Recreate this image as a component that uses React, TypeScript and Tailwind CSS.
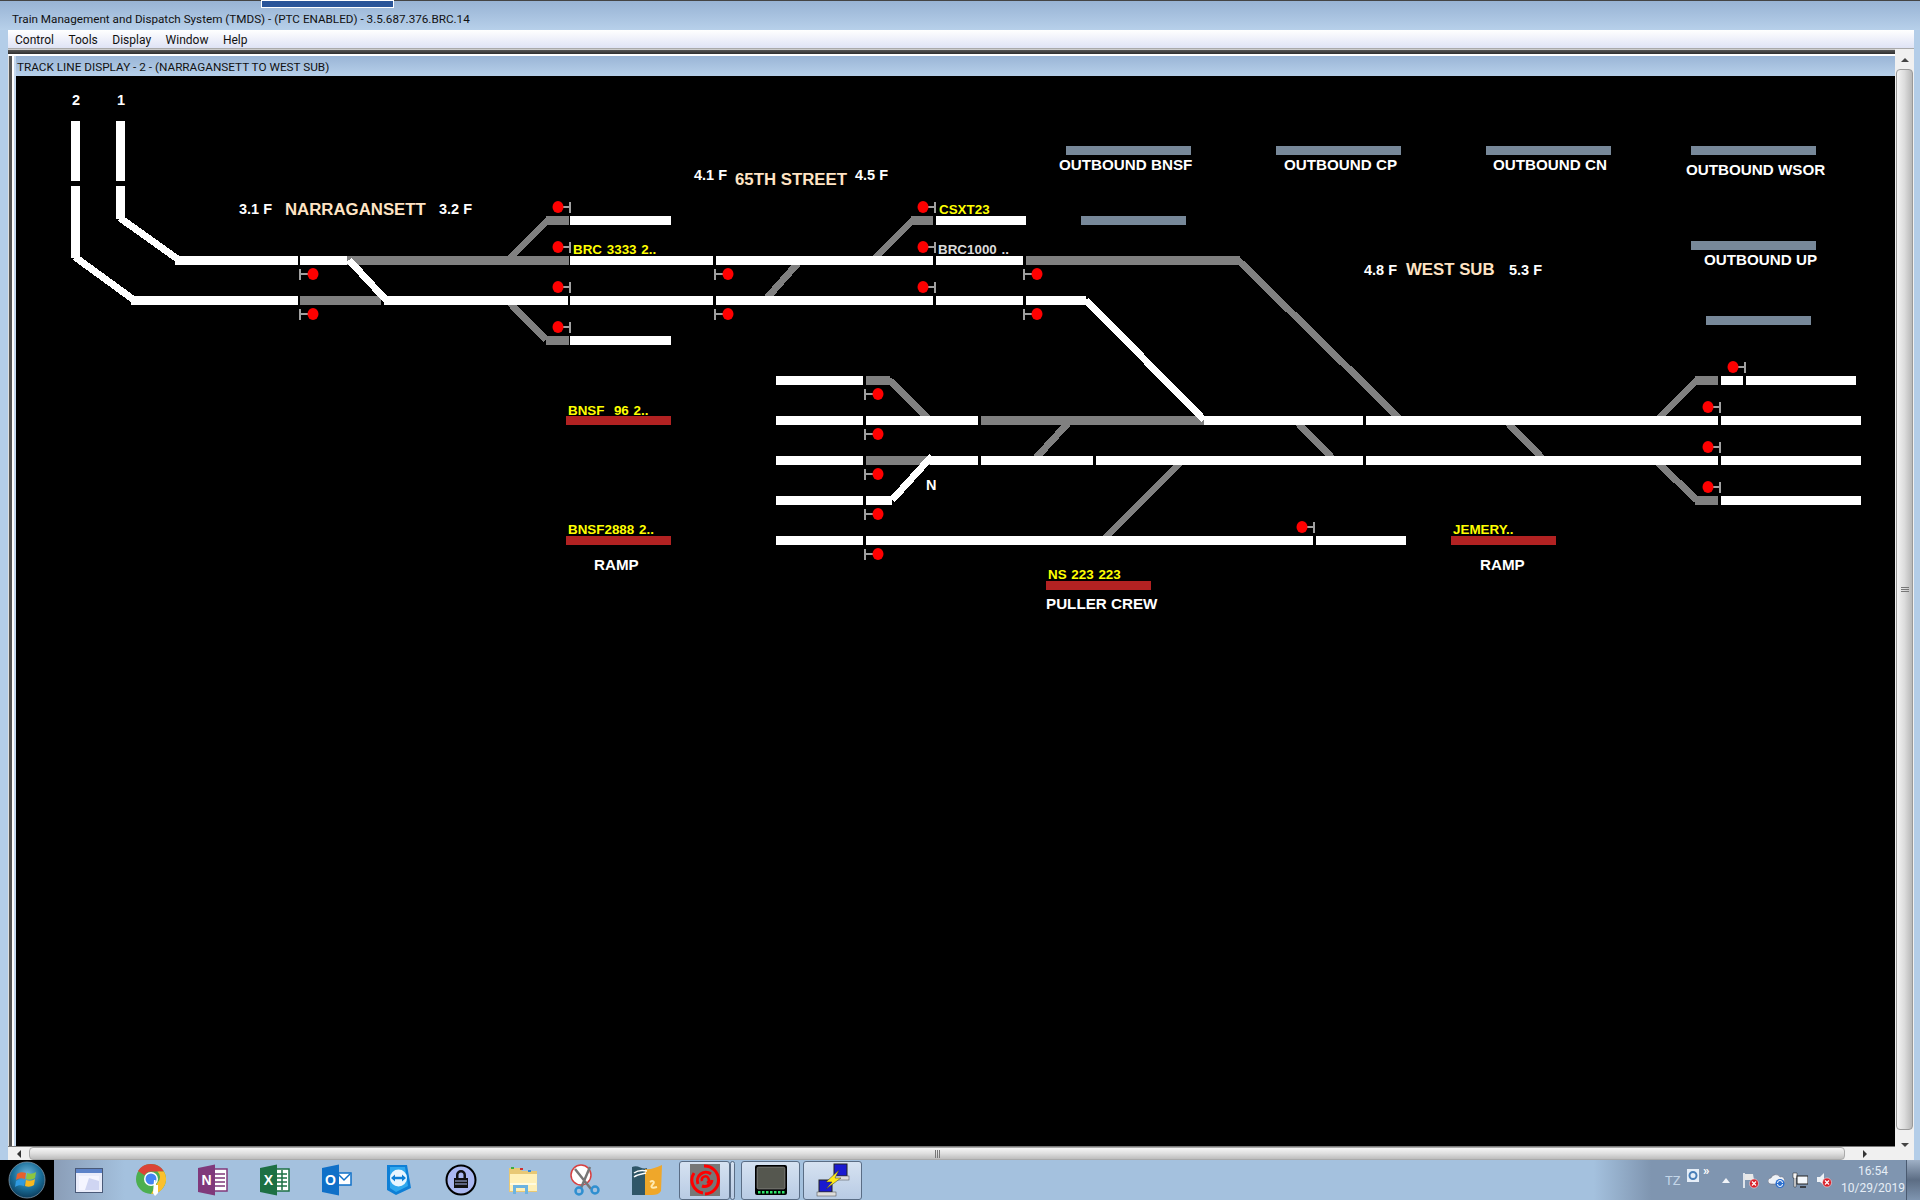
const WHITE_TRACKS = [
  [71, 80, 121, 181], [116, 125, 121, 181], [71, 80, 186, 258], [116, 125, 186, 219],
];

// [x1, x2, top] — all horizontal track segments are 9px tall
const WHITE_SEGMENTS = [
  [175, 298, 256], [300, 347, 256], [570, 713, 256], [716, 933, 256], [936, 1023, 256],
  [131, 298, 296], [384, 568, 296], [570, 713, 296], [716, 933, 296], [936, 1023, 296], [1026, 1086, 296],
  [570, 671, 216], [570, 671, 336], [936, 1026, 216],
  [776, 863, 376], [1721, 1743, 376], [1746, 1856, 376],
  [776, 863, 416], [866, 978, 416], [1204, 1363, 416], [1366, 1718, 416], [1721, 1861, 416],
  [776, 863, 456], [930, 978, 456], [981, 1093, 456], [1096, 1363, 456], [1366, 1718, 456], [1721, 1861, 456],
  [776, 863, 496], [866, 892, 496], [1721, 1861, 496],
  [776, 863, 536], [866, 1313, 536], [1316, 1406, 536],
];

const GRAY_SEGMENTS = [
  [347, 569, 256], [300, 381, 296], [546, 569, 216], [546, 569, 336], [911, 933, 216], [1026, 1240, 256],
  [866, 890, 376], [981, 1206, 416], [866, 930, 456], [1695, 1718, 376], [1695, 1718, 496],
];

const GRAY_LINES = [
  [510, 258, 548, 220], [510, 303, 546, 340], [767, 298, 798, 263], [875, 258, 913, 220], [1238, 260, 1399, 418],
  [889, 380, 929, 419], [1036, 458, 1068, 423], [1105, 538, 1180, 463], [1298, 423, 1332, 458], [1508, 423, 1542, 458],
  [1659, 418, 1699, 378], [1658, 463, 1697, 500],
];

const WHITE_LINES = [
  [75, 257, 134, 300], [120, 218, 179, 260], [349, 260, 386, 300], [1086, 300, 1204, 420], [892, 500, 932, 456],
];

// signals with the lamp left of the post: [lamp x, y]
const LAMPS_LEFT = [
  [558, 207], [558, 247], [558, 287], [558, 327], [923, 207], [923, 247], [923, 287],
  [1733, 367], [1708, 407], [1708, 447], [1708, 487], [1302, 527],
];

// signals with the lamp right of the post
const LAMPS_RIGHT = [
  [313, 274], [313, 314], [728, 274], [728, 314], [1037, 274], [1037, 314],
  [878, 394], [878, 434], [878, 474], [878, 514], [878, 554],
];

const SLATE_BARS = [
  [1066, 1191, 146], [1276, 1401, 146], [1486, 1611, 146], [1691, 1816, 146],
  [1691, 1816, 241], [1706, 1811, 316], [1081, 1186, 216],
];

const RED_BARS = [
  [566, 671, 416], [566, 671, 536], [1046, 1151, 581], [1451, 1556, 536],
];

function TrackDiagram() {
  return (
    <svg className="absolute inset-0 h-full w-full" viewBox="16 76 1879 1070" shapeRendering="crispEdges">
      {GRAY_LINES.map(([x1, y1, x2, y2], i) => (
        <line key={i} x1={x1} y1={y1} x2={x2} y2={y2} stroke="#808080" strokeWidth="7" />
      ))}
      {GRAY_SEGMENTS.map(([a, b, y], i) => (
        <rect key={i} x={a} y={y} width={b - a} height="9" fill="#808080" />
      ))}
      {WHITE_LINES.map(([x1, y1, x2, y2], i) => (
        <line key={i} x1={x1} y1={y1} x2={x2} y2={y2} stroke="#fff" strokeWidth="7" />
      ))}
      {WHITE_TRACKS.map(([a, b, t, e], i) => (
        <rect key={i} x={a} y={t} width={b - a} height={e - t} fill="#fff" />
      ))}
      {WHITE_SEGMENTS.map(([a, b, y], i) => (
        <rect key={i} x={a} y={y} width={b - a} height="9" fill="#fff" />
      ))}
      {SLATE_BARS.map(([a, b, y], i) => (
        <rect key={i} x={a} y={y} width={b - a} height="9" fill="#778899" />
      ))}
      {RED_BARS.map(([a, b, y], i) => (
        <rect key={i} x={a} y={y} width={b - a} height="9" fill="#b22222" />
      ))}
      {LAMPS_LEFT.map(([x, y], i) => (
        <g key={i}>
          <rect x={x + 5} y={y - 1} width="7" height="2" fill="#a0a0a0" />
          <rect x={x + 11} y={y - 5} width="2" height="11" fill="#a0a0a0" />
          <ellipse cx={x} cy={y} rx="5.5" ry="6" fill="#f00" shapeRendering="auto" />
        </g>
      ))}
      {LAMPS_RIGHT.map(([x, y], i) => (
        <g key={i}>
          <rect x={x - 13} y={y - 1} width="8" height="2" fill="#a0a0a0" />
          <rect x={x - 14} y={y - 5} width="2" height="11" fill="#a0a0a0" />
          <ellipse cx={x} cy={y} rx="5.5" ry="6" fill="#f00" shapeRendering="auto" />
        </g>
      ))}
    </svg>
  );
}

function DiagramLabels() {
  const base = "absolute whitespace-pre font-bold font-['Liberation_Sans',Arial,sans-serif]";
  const speed = `${base} text-[14.5px] leading-4 text-white`;
  const station = `${base} text-[16.8px] leading-4 text-[#ffe4c4]`;
  const lane = `${base} text-[15.2px] leading-4 text-white`;
  const train = `${base} text-[13.4px] leading-4 text-[#ffff00] [word-spacing:1px]`;

  return (
    <>
      <span className={`${speed} left-[56px] top-[16px]`}>2</span>
      <span className={`${speed} left-[101px] top-[16px]`}>1</span>

      <span className={`${speed} left-[223px] top-[125px]`}>3.1 F</span>
      <span className={`${station} left-[269px] top-[126px]`}>NARRAGANSETT</span>
      <span className={`${speed} left-[423px] top-[125px]`}>3.2 F</span>

      <span className={`${speed} left-[678px] top-[91px]`}>4.1 F</span>
      <span className={`${station} left-[719px] top-[96px]`}>65TH STREET</span>
      <span className={`${speed} left-[839px] top-[91px]`}>4.5 F</span>

      <span className={`${speed} left-[1348px] top-[186px]`}>4.8 F</span>
      <span className={`${station} left-[1390px] top-[186px]`}>WEST SUB</span>
      <span className={`${speed} left-[1493px] top-[186px]`}>5.3 F</span>

      <span className={`${lane} left-[1043px] top-[81px]`}>OUTBOUND BNSF</span>
      <span className={`${lane} left-[1268px] top-[81px]`}>OUTBOUND CP</span>
      <span className={`${lane} left-[1477px] top-[81px]`}>OUTBOUND CN</span>
      <span className={`${lane} left-[1670px] top-[86px]`}>OUTBOUND WSOR</span>
      <span className={`${lane} left-[1688px] top-[176px]`}>OUTBOUND UP</span>

      <span className={`${train} left-[557px] top-[166px]`}>BRC 3333 2..</span>
      <span className={`${train} left-[923px] top-[126px]`}>CSXT23</span>
      <span className={`${train} left-[922px] top-[166px] text-[#dcdcdc]!`}>BRC1000 ..</span>
      <span className={`${train} left-[552px] top-[327px]`}>BNSF  96 2..</span>
      <span className={`${train} left-[552px] top-[446px]`}>BNSF2888 2..</span>
      <span className={`${train} left-[1032px] top-[491px]`}>NS 223 223</span>
      <span className={`${train} left-[1437px] top-[446px]`}>JEMERY..</span>

      <span className={`${lane} left-[578px] top-[481px]`}>RAMP</span>
      <span className={`${lane} left-[1464px] top-[481px]`}>RAMP</span>
      <span className={`${lane} left-[1030px] top-[520px]`}>PULLER CREW</span>
      <span className={`${speed} left-[910px] top-[401px]`}>N</span>
    </>
  );
}

function Grip({ vertical = false }: { vertical?: boolean }) {
  return (
    <div className={vertical ? "flex flex-col gap-px" : "flex gap-px"}>
      <div className={vertical ? "h-px w-2 bg-[#777]" : "h-2 w-px bg-[#777]"} />
      <div className={vertical ? "h-px w-2 bg-[#777]" : "h-2 w-px bg-[#777]"} />
      <div className={vertical ? "h-px w-2 bg-[#777]" : "h-2 w-px bg-[#777]"} />
    </div>
  );
}

function VerticalScrollbar() {
  return (
    <div className="flex w-[19px] flex-col bg-[#f0f0f0] pt-px">
      <div className="flex h-[19px] items-center justify-center">
        <div className="h-0 w-0 border-x-[4px] border-b-[4px] border-x-transparent border-b-[#444]" />
      </div>
      <div className="mx-px flex flex-1 items-start justify-center rounded-sm border border-[#999] bg-gradient-to-r from-[#f4f4f4] via-[#dcdcdc] to-[#b8b8b8] pt-[517px]">
        <Grip vertical />
      </div>
      <div className="flex h-[30px] items-center justify-center">
        <div className="h-0 w-0 border-x-[4px] border-t-[4px] border-x-transparent border-t-[#444]" />
      </div>
    </div>
  );
}

function HorizontalScrollbar() {
  return (
    <div className="flex h-[14px] border-t border-[#777] bg-[#f0f0f0]">
      <div className="flex w-[21px] shrink-0 items-center justify-center">
        <div className="h-0 w-0 border-y-[4px] border-r-[4px] border-y-transparent border-r-[#333]" />
      </div>
      <div className="flex w-[1816px] shrink-0 items-center justify-center rounded-sm border border-[#aaa] bg-gradient-to-b from-[#f6f6f6] via-[#dedede] to-[#bdbdbd]">
        <Grip />
      </div>
      <div className="flex flex-1 items-center justify-end pr-[28px]">
        <div className="h-0 w-0 border-y-[4px] border-l-[4px] border-y-transparent border-l-[#333]" />
      </div>
    </div>
  );
}

function StartOrb() {
  return (
    <div className="flex h-10 w-[54px] shrink-0 items-center justify-center bg-black">
      <svg width="38" height="38" viewBox="0 0 38 38">
        <defs>
          <radialGradient id="orb" cx="50%" cy="35%" r="70%">
            <stop offset="0%" stopColor="#6fb6dc" />
            <stop offset="55%" stopColor="#1a6f9a" />
            <stop offset="100%" stopColor="#0a3350" />
          </radialGradient>
        </defs>
        <circle cx="19" cy="19" r="18" fill="url(#orb)" stroke="#7d95a8" strokeWidth="0.8" />
        <path d="M9 13c3-2 6-2 9-1l-1 6c-3-1-6-1-9 1z" fill="#e8602c" />
        <path d="M19 12c3 1 6 1 9-1l-1 6c-3 2-6 2-9 1z" fill="#8cc63f" />
        <path d="M8 20c3-2 6-2 9-1l-1 6c-3-1-6-1-9 1z" fill="#2f9ae0" />
        <path d="M18 19c3 1 6 1 9-1l-1 6c-3 2-6 2-9 1z" fill="#f7b81e" />
      </svg>
    </div>
  );
}

function WindowIcon() {
  return (
    <svg width="28" height="25" viewBox="0 0 28 25">
      <rect x="0.5" y="0.5" width="27" height="24" fill="#e9ecfa" stroke="#4a5a78" />
      <rect x="1" y="1" width="26" height="4" fill="#5c82c8" />
      <path d="M4 8h20v14H4z" fill="#f4f5ff" />
      <path d="M14 10l10 3v9H10z" fill="#cfd5f2" />
    </svg>
  );
}

function ChromeIcon() {
  return (
    <svg width="32" height="34" viewBox="0 0 32 34">
      <circle cx="16" cy="16" r="15" fill="#4caf50" />
      <path d="M16 1a15 15 0 0 1 13 7.500H16a7.500 7.500 0 0 0-6.500 3.800L3 8A15 15 0 0 1 16 1z" fill="#db4437" />
      <path d="M29 8.500A15 15 0 0 1 16 31l6.500-11.300a7.500 7.500 0 0 0 0-11.200z" fill="#fbc02d" />
      <circle cx="16" cy="16" r="7" fill="#fff" />
      <circle cx="16" cy="16" r="5.500" fill="#4285f4" />
      <path d="M19 17l1.500 0 .5 5 2 0 0 8-3 3-2-3z" fill="#fff" />
    </svg>
  );
}

function OfficeIcon({ color, letter, children }: { color: string; letter: string; children: React.ReactNode }) {
  return (
    <svg width="32" height="32" viewBox="0 0 32 32">
      {children}
      <path d="M1 4l17-3.500v31L1 28z" fill={color} />
      <text x="9.500" y="21" textAnchor="middle" fill="#fff" fontSize="14" fontWeight="700" fontFamily="Liberation Sans, sans-serif">
        {letter}
      </text>
    </svg>
  );
}

function TeamViewerIcon() {
  return (
    <svg width="28" height="32" viewBox="0 0 28 32">
      <path d="M2 1h20l4 23-15 7-9-5z" fill="#0e7fd6" />
      <path d="M5 3h15l3 19-12 6-6-4z" fill="#2fa8ee" />
      <circle cx="13.500" cy="14" r="8.500" fill="#e8f6ff" />
      <path d="M6 14l4-3.500v2.300h7v-2.300l4 3.500-4 3.500v-2.300h-7v2.300z" fill="#0e7fd6" />
    </svg>
  );
}

function KeePassIcon() {
  return (
    <svg width="32" height="32" viewBox="0 0 32 32">
      <circle cx="16" cy="16" r="14.500" fill="#aab8f0" stroke="#000" strokeWidth="2" />
      <path d="M11 14v-3a5 5 0 0 1 10 0v3h-2.500v-3a2.500 2.500 0 0 0-5 0v3z" fill="#111" />
      <rect x="9" y="14" width="14" height="10" fill="#111" />
      <path d="M10 17h12M10 20h12" stroke="#aab8f0" strokeWidth="1" />
    </svg>
  );
}

function FolderIcon() {
  return (
    <svg width="32" height="32" viewBox="0 0 32 32">
      <path d="M2 4h11l2 3h15v21H2z" fill="#e8c875" />
      <path d="M3 10h27v17H3z" fill="#fff0b8" />
      <rect x="4" y="3" width="3" height="2" fill="#3cb043" />
      <rect x="13" y="4" width="3" height="2" fill="#d03030" />
      <rect x="21" y="6" width="3" height="2" fill="#3088d8" />
      <path d="M6 30v-9a2 2 0 0 1 2-2h11a2 2 0 0 1 2 2v9h-3v-6H9v6z" fill="#6bb3e0" />
      <path d="M3 20h26" stroke="#fffbe0" strokeWidth="2" />
    </svg>
  );
}

function SnipIcon() {
  return (
    <svg width="30" height="32" viewBox="0 0 30 32">
      <circle cx="11" cy="11" r="10" fill="#fff" stroke="#d84040" strokeWidth="1.500" />
      <path d="M5 5l16 20M20 3L11 24" stroke="#777" strokeWidth="2.500" />
      <circle cx="9" cy="27" r="3.500" fill="none" stroke="#2f8fd0" strokeWidth="2.500" />
      <circle cx="25" cy="26" r="3.500" fill="none" stroke="#2f8fd0" strokeWidth="2.500" />
    </svg>
  );
}

function NotesIcon() {
  return (
    <svg width="32" height="32" viewBox="0 0 32 32">
      <path d="M1 3c6-3 10 3 15 1l-2 27H1z" fill="#2f5668" />
      <path d="M14 5c5 1 10-1 17-4l-1 26c-2 3-5 4-9 4l-7 0z" fill="#efa72a" />
      <path d="M3 9c4-3 8-3 13-2M3 13c4-3 9-3 12-4" stroke="#fff" strokeWidth="1.500" fill="none" />
      <path d="M19 18c3-2 5 0 3 2s-3 5 4 3" stroke="#ffe9b0" strokeWidth="2" fill="none" />
    </svg>
  );
}

function SwirlIcon() {
  return (
    <svg width="30" height="32" viewBox="0 0 30 32">
      <rect width="30" height="32" fill="#777" />
      <path d="M14 2a14 14 0 0 1 1 28" stroke="#f00" strokeWidth="3" fill="none" />
      <path d="M4 9a13 13 0 0 0 9 20" stroke="#f00" strokeWidth="3" fill="none" />
      <path d="M8 20a8.500 8.500 0 0 1 13-10" stroke="#f00" strokeWidth="3" fill="none" />
      <path d="M22 16a7.500 7.500 0 0 1-10 6" stroke="#f00" strokeWidth="3" fill="none" />
      <path d="M12 17a3.500 3.500 0 1 1 5 2" stroke="#f00" strokeWidth="2.500" fill="none" />
    </svg>
  );
}

function MonitorIcon() {
  return (
    <svg width="32" height="30" viewBox="0 0 32 30">
      <rect width="32" height="30" rx="2" fill="#000" />
      <rect x="2" y="2" width="28" height="22" rx="1.500" fill="#55574f" stroke="#aaa" strokeWidth="0.500" />
      {[3, 7, 11, 15, 19, 23, 27].map((x) => (
        <rect key={x} x={x} y="26" width="2.500" height="2.500" fill="#2ee66b" />
      ))}
    </svg>
  );
}

function PuttyIcon() {
  return (
    <svg width="34" height="34" viewBox="0 0 34 34">
      <rect x="18" y="1" width="13" height="12" fill="#1a1ad0" stroke="#222" />
      <rect x="17" y="13" width="16" height="4" fill="#ddd" stroke="#444" strokeWidth="0.500" />
      <rect x="3" y="17" width="13" height="12" fill="#1a1ad0" stroke="#222" />
      <rect x="1" y="29" width="19" height="4" fill="#ddd" stroke="#444" strokeWidth="0.500" />
      <path d="M23 7L10 19l6 0-6 7 15-11-6 0z" fill="#ffe81a" stroke="#333" strokeWidth="0.500" />
    </svg>
  );
}

function TaskSlot({ children }: { children: React.ReactNode }) {
  return <div className="flex w-[62px] shrink-0 items-center justify-center">{children}</div>;
}

function TaskButton({ className, children }: { className: string; children: React.ReactNode }) {
  return (
    <div
      className={`flex h-[39px] shrink-0 items-center justify-center rounded-[3px] border border-[#5a6d85] bg-gradient-to-b from-[#d6e2f1] to-[#b8cbe4] ${className}`}
    >
      {children}
    </div>
  );
}

function TrayIcons() {
  return (
    <>
      <svg className="ml-[8px] mb-[9px]" width="12" height="13" viewBox="0 0 12 13">
        <rect width="12" height="13" fill="#e6eef8" />
        <circle cx="6" cy="6.500" r="3.500" fill="none" stroke="#4a7fb8" strokeWidth="2" />
      </svg>
      <span className="mb-[20px] ml-[4px] w-[10px] text-[13px] leading-none font-bold text-white">»</span>
      <div className="ml-[9px] h-0 w-0 border-x-[4px] border-b-[5px] border-x-transparent border-b-[#f2f5f9]" />
      <svg className="ml-[13px]" width="16" height="17" viewBox="0 0 16 17">
        <path d="M1 1v15" stroke="#fff" strokeWidth="1.500" />
        <path d="M2 2h8l1 6H2z" fill="#e8e8e8" />
        <circle cx="11" cy="11.500" r="4.500" fill="#d8202a" stroke="#fff" strokeWidth="0.500" />
        <path d="M9 9.500l4 4M13 9.500l-4 4" stroke="#fff" strokeWidth="1.200" />
      </svg>
      <svg className="ml-[9px]" width="17" height="15" viewBox="0 0 17 15">
        <path d="M3 11a3 3 0 0 1 0-6 5 5 0 0 1 9-1 3.500 3.500 0 0 1 2 7z" fill="#eef2f7" stroke="#667" strokeWidth="0.500" />
        <circle cx="12" cy="10.500" r="4.500" fill="#2a6fd0" />
        <path d="M9.500 10a2.500 2.500 0 0 1 5 0M14.500 11a2.500 2.500 0 0 1-5 0" stroke="#fff" strokeWidth="1" fill="none" />
      </svg>
      <svg className="ml-[7px]" width="16" height="16" viewBox="0 0 16 16">
        <path d="M1 1h4v5H4v9H2V6H1z" fill="#f4f4f4" stroke="#222" strokeWidth="0.500" />
        <rect x="5" y="4" width="11" height="8" fill="#f4f8fc" stroke="#222" />
        <path d="M8 15h6" stroke="#222" strokeWidth="1.500" />
      </svg>
      <svg className="ml-[8px]" width="16" height="16" viewBox="0 0 16 16">
        <path d="M1 5h3l4-4v12L4 10H1z" fill="#eef2f6" />
        <circle cx="11" cy="10.500" r="4.500" fill="#d8202a" stroke="#fff" strokeWidth="0.500" />
        <path d="M9 8.500l4 4M13 8.500l-4 4" stroke="#fff" strokeWidth="1.200" />
      </svg>
    </>
  );
}

function Taskbar() {
  return (
    <div className="flex h-10 shrink-0 bg-[linear-gradient(90deg,#000_0%,#000_2.8%,#8a9db7_2.8%,#a4c1de_6.5%,#a4c1de_83%,#7f95b0_86%,#7f95b0_100%)]">
      <StartOrb />
      <div className="flex flex-1 items-center pl-1">
        <TaskSlot><WindowIcon /></TaskSlot>
        <TaskSlot><ChromeIcon /></TaskSlot>
        <TaskSlot>
          <OfficeIcon color="#80397b" letter="N">
            <rect x="16" y="5" width="14" height="22" fill="#fff" stroke="#80397b" strokeWidth="1.500" />
            <path d="M18 10h10M18 14h10M18 18h10M18 22h10" stroke="#80397b" strokeWidth="1.500" />
          </OfficeIcon>
        </TaskSlot>
        <TaskSlot>
          <OfficeIcon color="#1d7044" letter="X">
            <rect x="16" y="5" width="14" height="22" fill="#fff" stroke="#1d7044" strokeWidth="1.500" />
            <path d="M18 10h10M18 14h10M18 18h10M18 22h10M23 6v20" stroke="#1d7044" strokeWidth="1.500" />
          </OfficeIcon>
        </TaskSlot>
        <TaskSlot>
          <OfficeIcon color="#0f70c8" letter="O">
            <rect x="16" y="9" width="14" height="12" fill="#fff" stroke="#0f70c8" strokeWidth="1.500" />
            <path d="M17 10l6 6 6-6" stroke="#0f70c8" strokeWidth="1.500" fill="none" />
          </OfficeIcon>
        </TaskSlot>
        <TaskSlot><TeamViewerIcon /></TaskSlot>
        <TaskSlot><KeePassIcon /></TaskSlot>
        <TaskSlot><FolderIcon /></TaskSlot>
        <TaskSlot><SnipIcon /></TaskSlot>
        <TaskSlot><NotesIcon /></TaskSlot>
        <TaskButton className="ml-px w-[51px]"><SwirlIcon /></TaskButton>
        <TaskButton className="w-[5px]"><span /></TaskButton>
        <TaskButton className="ml-[6px] w-[59px]"><MonitorIcon /></TaskButton>
        <TaskButton className="ml-[3px] w-[59px]"><PuttyIcon /></TaskButton>

        <div className="ml-[803px] flex items-center">
          <span className="w-[14px] font-['Roboto',sans-serif] text-[13px] leading-none text-[#c4d6e8]">TZ</span>
          <TrayIcons />
          <div className="ml-[12px] flex w-[58px] flex-col items-center font-['Roboto',sans-serif] text-[12px] leading-[17px] text-[#e6eef6]">
            <span>16:54</span>
            <span>10/29/2019</span>
          </div>
        </div>
        <div className="ml-auto h-full w-[14px] border-l border-[#4a5a70] bg-gradient-to-b from-[#9fb0c6] via-[#5c6d84] to-[#7f95b0]" />
      </div>
    </div>
  );
}

export default function App() {
  return (
    <div className="flex h-[1200px] w-[1920px] flex-col overflow-hidden bg-[#b3cde8] font-['Roboto',sans-serif] text-[#111]">
      <div className="relative h-[30px] shrink-0 border-t border-[#444] bg-gradient-to-b from-[#98b3d4] to-[#b7d0ea] pl-3 text-[11.7px] leading-[36px]">
        Train Management and Dispatch System (TMDS) - (PTC ENABLED) - 3.5.687.376.BRC.14
        <div className="absolute left-[261px] -top-px h-2 w-[133px] border border-white bg-[#2a5599]" />
      </div>

      <div className="ml-2 mr-[6px] flex h-[19px] shrink-0 items-center gap-[14.5px] border-b border-[#aaa] bg-gradient-to-b from-white to-[#dfe3f5] pt-px pl-[7px] text-[12px]">
        <span>Control</span>
        <span>Tools</span>
        <span>Display</span>
        <span>Window</span>
        <span>Help</span>
      </div>

      <div className="ml-2 mr-[6px] flex min-h-0 flex-1">
        <div className="flex min-w-0 flex-1 flex-col">
          <div className="h-[7px] shrink-0 border-t border-[#ccc] bg-[linear-gradient(180deg,#555_0%,#333_60%,#fff_60%,#fff_100%)]" />
          <div className="flex min-h-0 flex-1">
            <div className="w-2 shrink-0 bg-[linear-gradient(90deg,#ddd_0%,#ddd_12%,#555_12%,#555_50%,#fff_50%,#fff_75%,#c5d8ee_75%)]" />
            <div className="flex min-w-0 flex-1 flex-col">
              <div className="h-5 shrink-0 bg-gradient-to-b from-[#9ab5d6] to-[#b7d0ea] pt-px pl-px text-[11.75px] leading-5">
                TRACK LINE DISPLAY - 2 - (NARRAGANSETT TO WEST SUB)
              </div>
              <div className="relative min-h-0 flex-1 overflow-hidden bg-black">
                <TrackDiagram />
                <DiagramLabels />
              </div>
            </div>
          </div>
          <HorizontalScrollbar />
        </div>
        <VerticalScrollbar />
      </div>

      <Taskbar />
    </div>
  );
}
